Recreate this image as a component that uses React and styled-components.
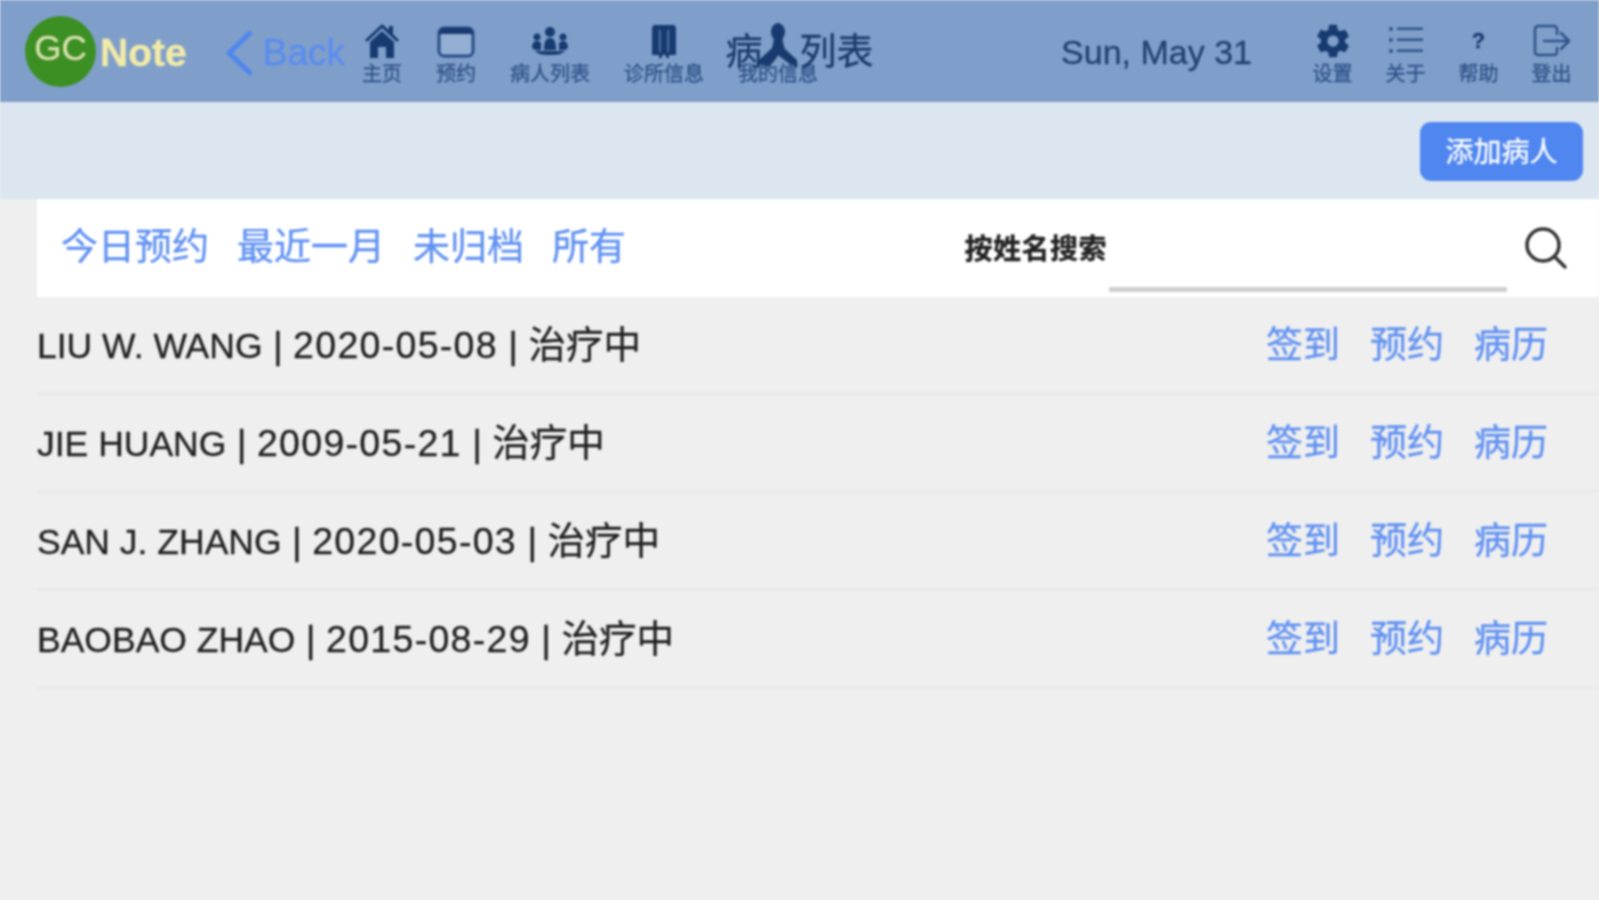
import React from 'react';
import styled, {createGlobalStyle} from 'styled-components';
import {IoSettingsSharp} from 'react-icons/io5';

const sans = `"Liberation Sans", "Noto Sans CJK SC", sans-serif`;

const patients = [
    {id: 1, name: 'LIU W. WANG', date: '2020-05-08'},
    {id: 2, name: 'JIE HUANG', date: '2009-05-21'},
    {id: 3, name: 'SAN J. ZHANG', date: '2020-05-03'},
    {id: 4, name: 'BAOBAO ZHAO', date: '2015-08-29'}
];

const HomeIcon = () => (
    <svg width="36" height="36" viewBox="0 0 36 36" fill="#173a70">
        <path d="M18 1l7 6V3h4v8l6 6-2 2-15-14L3 19l-2-2z"/>
        <path d="M18 8l12 11v16h-8V24h-8v11H6V19z"/>
    </svg>
);

const CalendarIcon = () => (
    <svg width="38" height="34" viewBox="0 0 38 34" fill="none">
        <rect x="2" y="4" width="34" height="28" rx="5" fill="#93aed3" stroke="#2a4c84" strokeWidth="3"/>
        <path d="M2 9a5 5 0 0 1 5-5h24a5 5 0 0 1 5 5v1H2z" fill="#173a70"/>
    </svg>
);

const PeopleIcon = () => (
    <svg width="42" height="30" viewBox="0 0 42 30" fill="#173a70">
        <circle cx="21" cy="6" r="5"/>
        <path d="M15 24c0-9 2-12 6-12s6 3 6 12z"/>
        <circle cx="8" cy="11" r="3.500"/>
        <path d="M3 22c0-5 2-7 5-7 2 0 3 1 4 2v7H6z"/>
        <circle cx="34" cy="11" r="3.500"/>
        <path d="M39 22c0-5-2-7-5-7-2 0-3 1-4 2v7h6z"/>
        <path d="M6 25h30c-3 3-7 4-15 4S9 28 6 25z"/>
    </svg>
);

const ClinicIcon = () => (
    <svg width="28" height="36" viewBox="0 0 28 36" fill="#173a70">
        <path d="M3 2h22v2h1v28h-7v3h-3v-3h-4v3H9v-3H2V4h1z"/>
        <path d="M9 7h1.500v22H9zM17.500 7H19v22h-1.500z" fill="#5f7fb0"/>
    </svg>
);

const PersonIcon = () => (
    <PersonSvg width="42" height="44" viewBox="0 0 42 44" fill="#173a70">
        <ellipse cx="21" cy="9" rx="7" ry="9"/>
        <path d="M17 16h8l2 9 13 12v5h-6L21 32 8 42H2v-5l13-12z"/>
    </PersonSvg>
);

const ListIcon = () => (
    <svg width="36" height="32" viewBox="0 0 36 32" fill="#2f5288">
        <circle cx="3" cy="4" r="2"/>
        <circle cx="3" cy="15" r="2"/>
        <circle cx="3" cy="26" r="2"/>
        <rect x="9" y="2.500" width="26" height="2.500"/>
        <rect x="9" y="13.500" width="26" height="2.500"/>
        <rect x="9" y="24.500" width="26" height="2.500"/>
    </svg>
);

const HelpIcon = () => <QuestionMark>?</QuestionMark>;

const LogoutIcon = () => (
    <svg width="38" height="34" viewBox="0 0 38 34" fill="none" stroke="#2f5288" strokeWidth="2.500" strokeLinecap="round" strokeLinejoin="round">
        <path d="M24 10V5a3 3 0 0 0-3-3H5a3 3 0 0 0-3 3v23a3 3 0 0 0 3 3h16a3 3 0 0 0 3-3v-4"/>
        <path d="M11 17h24M28 9l8 8-8 8"/>
    </svg>
);

const SearchIcon = () => (
    <svg width="46" height="46" viewBox="0 0 46 46" fill="none" stroke="#333" strokeWidth="3.500" strokeLinecap="round">
        <circle cx="20" cy="20" r="16"/>
        <path d="M32 32l10 10"/>
    </svg>
);

const leftNav = [
    {label: '主页', icon: <HomeIcon/>, width: 74},
    {label: '预约', icon: <CalendarIcon/>, width: 74},
    {label: '病人列表', icon: <PeopleIcon/>, width: 114},
    {label: '诊所信息', icon: <ClinicIcon/>, width: 114},
    {label: '我的信息', icon: <PersonIcon/>, width: 114}
];

const rightNav = [
    {label: '设置', icon: <IoSettingsSharp size={36} color="#173a70"/>},
    {label: '关于', icon: <ListIcon/>},
    {label: '帮助', icon: <HelpIcon/>},
    {label: '登出', icon: <LogoutIcon/>}
];

export default function App() {
    return (
        <Page>
            <GlobalStyle/>
            <Header>
                <Logo>
                    <LogoBadge>GC</LogoBadge>
                    <LogoText>Note</LogoText>
                </Logo>
                <BackLink>
                    <svg width="28" height="46" viewBox="0 0 28 46" fill="none" stroke="#4f86f0" strokeWidth="5" strokeLinecap="round" strokeLinejoin="round">
                        <path d="M25 3L4 23l21 20"/>
                    </svg>
                    Back
                </BackLink>
                <NavGroup>
                    {leftNav.map(item => (
                        <NavItem key={item.label} $width={item.width}>
                            <NavIcon>{item.icon}</NavIcon>
                            <NavLabel>{item.label}</NavLabel>
                        </NavItem>
                    ))}
                </NavGroup>
                <Title>病人列表</Title>
                <DateText>Sun, May 31</DateText>
                <NavGroup>
                    {rightNav.map(item => (
                        <NavItem key={item.label} $width={73}>
                            <NavIcon>{item.icon}</NavIcon>
                            <NavLabel>{item.label}</NavLabel>
                        </NavItem>
                    ))}
                </NavGroup>
            </Header>
            <ActionBar>
                <AddButton>添加病人</AddButton>
            </ActionBar>
            <Content>
                <FilterBar>
                    <Tabs>
                        <TabLink>今日预约</TabLink>
                        <TabLink>最近一月</TabLink>
                        <TabLink>未归档</TabLink>
                        <TabLink>所有</TabLink>
                    </Tabs>
                    <SearchLabel>按姓名搜索</SearchLabel>
                    <SearchInput/>
                    <SearchButton><SearchIcon/></SearchButton>
                </FilterBar>
                {patients.map(patient => (
                    <Row key={patient.id}>
                        <RowText>
                            <RowName>{patient.name}</RowName> | <RowDate>{patient.date}</RowDate> | 治疗中
                        </RowText>
                        <RowActions>
                            <ActionLink>签到</ActionLink>
                            <ActionLink>预约</ActionLink>
                            <ActionLink>病历</ActionLink>
                        </RowActions>
                    </Row>
                ))}
            </Content>
        </Page>
    );
}

const GlobalStyle = createGlobalStyle`
    html, body {
        margin: 0;
        padding: 0;
        background: #efefef;
        overflow: hidden;
    }
`;

const Page = styled.div`
    position: relative;
    width: 1599px;
    height: 900px;
    background: #efefef;
    font-family: ${sans};
    filter: blur(1px);
    -webkit-text-stroke: 0.3px;
`;

const Header = styled.header`
    height: 102px;
    display: flex;
    align-items: center;
    padding: 0 11px 0 25px;
    box-sizing: border-box;
    background: #7f9fca;
    color: #173a70;
`;

const Logo = styled.div`
    display: flex;
    align-items: center;
    width: 200px;
`;

const LogoBadge = styled.div`
    width: 71px;
    height: 71px;
    border-radius: 50%;
    background: #3c8f22;
    color: #d9e0b0;
    font-size: 35px;
    line-height: 64px;
    text-align: center;
    flex-shrink: 0;
`;

const LogoText = styled.span`
    margin: 4px 0 0 4px;
    font-size: 39px;
    font-weight: bold;
    color: #f2eaa8;
`;

const BackLink = styled.div`
    display: flex;
    align-items: center;
    gap: 10px;
    width: 120px;
    padding-top: 3px;
    font-size: 37px;
    color: #5a8cf0;
`;

const NavGroup = styled.nav`
    display: flex;
`;

const NavItem = styled.div`
    width: ${props => props.$width}px;
    display: flex;
    flex-direction: column;
    align-items: center;
`;

const NavIcon = styled.div`
    height: 46px;
    padding-top: 4px;
    box-sizing: border-box;
    display: flex;
    align-items: center;
    justify-content: center;
`;

const PersonSvg = styled.svg`
    margin-top: 8px;
`;

const NavLabel = styled.span`
    font-size: 20px;
    line-height: 24px;
    color: #2f5288;
`;

const QuestionMark = styled.span`
    font-size: 22px;
    font-weight: bold;
    color: #173a70;
`;

const Title = styled.h1`
    position: absolute;
    top: 28px;
    left: 0;
    width: 100%;
    margin: 0;
    text-align: center;
    font-size: 37px;
    line-height: 50px;
    font-weight: normal;
    color: #1c3a6b;
    pointer-events: none;
`;

const DateText = styled.div`
    margin-left: auto;
    margin-right: 44px;
    padding-top: 3px;
    font-size: 34px;
    color: #23436f;
`;

const ActionBar = styled.div`
    height: 97px;
    display: flex;
    justify-content: flex-end;
    align-items: flex-start;
    padding: 20px 16px 0 0;
    box-sizing: border-box;
    background: #dbe6f0;
`;

const AddButton = styled.button`
    width: 163px;
    height: 59px;
    padding: 0 0 3px;
    border: 0;
    border-radius: 11px;
    background: #4f86f0;
    color: #fff;
    font-family: inherit;
    font-size: 28px;
`;

const Content = styled.main`
    padding-left: 37px;
`;

const FilterBar = styled.div`
    height: 98px;
    display: flex;
    align-items: center;
    padding: 0 30px 0 24px;
    box-sizing: border-box;
    background: #fff;
`;

const Tabs = styled.div`
    display: flex;
    gap: 28px;
    margin-right: auto;
    padding-bottom: 8px;
`;

const TabLink = styled.a`
    font-size: 37px;
    color: #5f90f2;
`;

const SearchLabel = styled.label`
    padding-bottom: 2px;
    font-size: 28px;
    font-weight: bold;
    letter-spacing: 0.5px;
    color: #222;
    margin-right: 2px;
`;

const SearchInput = styled.div`
    width: 398px;
    height: 93px;
    align-self: flex-start;
    box-sizing: border-box;
    border-bottom: 5px solid #cfcfcf;
`;

const SearchButton = styled.div`
    display: flex;
    margin-left: 16px;
`;

const Row = styled.div`
    height: 98px;
    display: flex;
    align-items: center;
    justify-content: space-between;
    padding: 0 51px 6px 0;
    box-sizing: border-box;
    border-bottom: 3px solid #e9e9e9;
`;

const RowText = styled.div`
    font-size: 37.500px;
    color: #1f1f1f;
`;

const RowName = styled.span`
    font-size: 35.500px;
`;

const RowDate = styled.span`
    letter-spacing: 1.300px;
`;

const RowActions = styled.div`
    display: flex;
    gap: 30px;
`;

const ActionLink = styled.a`
    font-size: 37px;
    color: #5f90f2;
`;
